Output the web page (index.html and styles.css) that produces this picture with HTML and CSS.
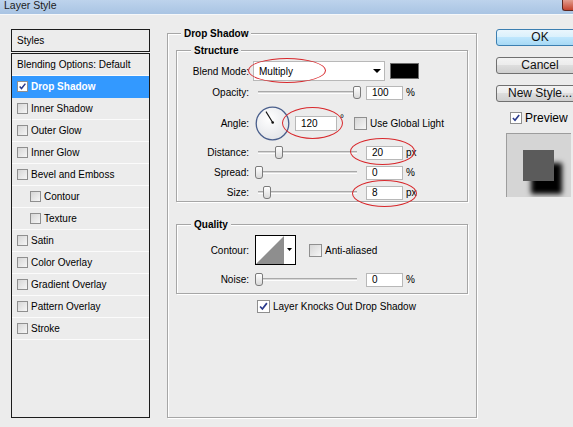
FILE: index.html
```html
<!DOCTYPE html>
<html>
<head>
<meta charset="utf-8">
<title>Layer Style</title>
<link rel="stylesheet" href="styles.css">
</head>
<body>
<div class="window">
  <div class="titlebar"><span class="title">Layer Style</span><span class="close"></span></div>
  <div class="content">
    <div class="styles-panel">
      <div class="styles-header">Styles</div>
      <ul class="styles-list">
        <li class="item">Blending Options: Default</li>
        <li class="item selected"><span class="cb checked"><svg viewBox="0 0 11 11"><path d="M2 5.5 L4.3 8 L9 2" fill="none" stroke="#2a3a8c" stroke-width="1.8"/></svg></span>Drop Shadow</li>
        <li class="item"><span class="cb"></span>Inner Shadow</li>
        <li class="item"><span class="cb"></span>Outer Glow</li>
        <li class="item"><span class="cb"></span>Inner Glow</li>
        <li class="item"><span class="cb"></span>Bevel and Emboss</li>
        <li class="item sub"><span class="cb"></span>Contour</li>
        <li class="item sub"><span class="cb"></span>Texture</li>
        <li class="item"><span class="cb"></span>Satin</li>
        <li class="item"><span class="cb"></span>Color Overlay</li>
        <li class="item"><span class="cb"></span>Gradient Overlay</li>
        <li class="item"><span class="cb"></span>Pattern Overlay</li>
        <li class="item"><span class="cb"></span>Stroke</li>
      </ul>
    </div>

    <fieldset class="group main-group">
      <legend>Drop Shadow</legend>
      <fieldset class="group sub-group structure">
        <legend>Structure</legend>
        <div class="row blend-row">
          <span class="lbl">Blend Mode:</span>
          <div class="select"><span>Multiply</span><span class="arrow"></span></div>
          <div class="swatch"></div>
        </div>
        <div class="row slider-row opacity-row">
          <span class="lbl">Opacity:</span>
          <div class="slider"><div class="track"></div><div class="thumb" style="left:98px"></div></div>
          <div class="num">100</div><span class="unit">%</span>
        </div>
        <div class="row angle-row">
          <span class="lbl">Angle:</span>
          <svg class="dial" viewBox="0 0 35 35">
            <defs><radialGradient id="dg" cx="0.4" cy="0.35" r="0.7"><stop offset="0" stop-color="#ffffff"/><stop offset="1" stop-color="#e2e4e8"/></radialGradient></defs>
            <circle cx="17.5" cy="17.5" r="16.3" fill="url(#dg)" stroke="#4a5f8c" stroke-width="1.3"/>
            <line x1="17.7" y1="16.5" x2="11" y2="5.6" stroke="#111" stroke-width="1.1"/>
            <circle cx="17.7" cy="16.5" r="1.3" fill="#111"/>
          </svg>
          <div class="num angle">120</div><span class="deg">°</span>
          <span class="cb lg glob"></span><span class="cbtext">Use Global Light</span>
        </div>
        <div class="row slider-row">
          <span class="lbl">Distance:</span>
          <div class="slider"><div class="track"></div><div class="thumb" style="left:20px"></div></div>
          <div class="num">20</div><span class="unit">px</span>
        </div>
        <div class="row slider-row">
          <span class="lbl">Spread:</span>
          <div class="slider"><div class="track"></div><div class="thumb" style="left:0px"></div></div>
          <div class="num">0</div><span class="unit">%</span>
        </div>
        <div class="row slider-row">
          <span class="lbl">Size:</span>
          <div class="slider"><div class="track"></div><div class="thumb" style="left:8px"></div></div>
          <div class="num">8</div><span class="unit">px</span>
        </div>
      </fieldset>

      <fieldset class="group sub-group quality">
        <legend>Quality</legend>
        <div class="row contour-row">
          <span class="lbl">Contour:</span>
          <svg class="contour" viewBox="0 0 41 30">
            <rect x="0.5" y="0.5" width="40" height="29" fill="#fff" stroke="#000"/>
            <polygon points="1,29 29,1 29,29" fill="#8e8e8e"/>
            <polygon points="32,13 37,13 34.5,16" fill="#000"/>
          </svg>
          <span class="cb lg aa"></span><span class="cbtext">Anti-aliased</span>
        </div>
        <div class="row slider-row noise-row">
          <span class="lbl">Noise:</span>
          <div class="slider"><div class="track"></div><div class="thumb" style="left:0px"></div></div>
          <div class="num">0</div><span class="unit">%</span>
        </div>
      </fieldset>

      <div class="row knock-row">
        <span class="cb lg checked"><svg viewBox="0 0 13 13"><path d="M2.5 6.5 L5.2 9.5 L10.5 2.5" fill="none" stroke="#2a3a8c" stroke-width="2"/></svg></span><span class="cbtext">Layer Knocks Out Drop Shadow</span>
      </div>
    </fieldset>

    <div class="side">
      <div class="btn ok">OK</div>
      <div class="btn">Cancel</div>
      <div class="btn">New Style...</div>
      <div class="preview-row">
        <span class="cb md checked"><svg viewBox="0 0 12 12"><path d="M2.3 6 L4.8 8.8 L9.8 2.3" fill="none" stroke="#2a3a8c" stroke-width="1.9"/></svg></span><span>Preview</span>
      </div>
      <div class="preview"><div class="pv-square"></div></div>
    </div>
  </div>

  <div class="mark m1"></div>
  <div class="mark m2"></div>
  <div class="mark m3"></div>
  <div class="mark m4"></div>
</div>
</body>
</html>
```

FILE: styles.css
```css
* { box-sizing: border-box; }
html, body { margin: 0; padding: 0; }
body {
  background: #ececec;
  font-family: "Liberation Sans", Arial, sans-serif;
  font-size: 10px;
  color: #000;
  width: 573px;
  height: 427px;
  overflow: hidden;
}
.window { position: relative; width: 573px; height: 427px; }

.titlebar {
  height: 15px;
  display: flex;
  justify-content: space-between;
  align-items: flex-start;
  background: linear-gradient(#bdd3ec, #a9c4e3);
  border-bottom: 1px solid #f6f8fa;
  overflow: hidden;
}
.title { font-size: 10.5px; line-height: 10px; margin-left: 4px; color: #1b1b1b; }
.close {
  width: 11px; height: 11px;
  background: linear-gradient(#e39d8f, #c5442f);
  border-left: 1px solid #5d2720;
  border-bottom: 1px solid #5d2720;
  border-bottom-left-radius: 3px;
}

.content { display: flex; align-items: flex-start; }

/* left list */
.styles-panel {
  margin: 14px 0 0 11px;
  width: 139px;
  height: 389px;
  display: flex;
  flex-direction: column;
  flex: none;
}
.styles-header {
  height: 23px;
  border: 1px solid #1c1c1c;
  padding-left: 5px;
  line-height: 21px;
}
.styles-list {
  list-style: none;
  margin: 1px 0 0;
  padding: 0;
  flex: 1;
  border: 1px solid #1c1c1c;
}
.item {
  height: 22px;
  border-bottom: 1px solid #fbfbfb;
  display: flex;
  align-items: center;
  gap: 3px;
  padding-left: 5px;
}
.item.sub { padding-left: 18px; }
.item.selected {
  background: #3399ff;
  border-bottom-color: #3399ff;
  color: #fff;
  font-weight: bold;
}

/* checkboxes */
.cb {
  width: 11px; height: 11px;
  border: 1px solid #8f8f8f;
  background: linear-gradient(135deg, #d6d6d6, #f6f6f6);
  flex: none;
  display: inline-block;
}
.cb.lg { width: 13px; height: 13px; }
.cb.md { width: 12px; height: 12px; }
.cb.checked { background: #fff; }
.cb svg { display: block; width: 100%; height: 100%; }
.cbtext { margin-left: 3px; white-space: nowrap; }

/* group boxes */
.group {
  margin: 0;
  padding: 0;
  min-width: 0;
  border: 1px solid #a6a6a6;
  box-shadow: 1px 1px 0 #fff, inset 1px 1px 0 #fff;
}
legend {
  font-weight: bold;
  padding: 0 3px;
  line-height: 13px;
  background: #ececec;
}
.main-group { width: 310px; height: 391px; margin: 12px 0 0 17px; flex: none; }
.main-group > legend { margin-left: 13px; }
.sub-group { width: 292px; margin-left: 8px; }
.sub-group > legend { margin-left: 14px; }
.structure { margin-top: 4px; padding-bottom: 1px; }
.quality { margin-top: 16px; padding-bottom: 6px; }

.row { display: flex; align-items: center; }
.lbl { width: 72px; text-align: right; flex: none; white-space: nowrap; }

.blend-row { margin-top: 4px; height: 20px; }
.select {
  margin-left: 4px;
  width: 132px; height: 20px;
  background: #fff;
  border: 1px solid #b8b8b8;
  display: flex;
  align-items: center;
  justify-content: space-between;
  padding: 0 3px 0 5px;
}
.arrow {
  width: 0; height: 0;
  border-left: 4px solid transparent;
  border-right: 4px solid transparent;
  border-top: 4px solid #000;
}
.swatch {
  margin-left: 5px;
  width: 29px; height: 16px;
  background: #000;
  border: 1px solid #6e6e6e;
}

.slider-row { height: 15px; margin-top: 5px; }
.opacity-row { margin-top: 4px; }
.slider {
  position: relative;
  margin-left: 6px;
  width: 104px; height: 15px;
  flex: none;
  display: flex;
  align-items: center;
  padding: 0 2px 0 3px;
}
.track {
  flex: 1;
  height: 3px;
  border-top: 1px solid #a9a9a9;
  border-bottom: 1px solid #fdfdfd;
  background: #d8d8d8;
}
.thumb {
  position: absolute;
  top: 1px;
  width: 8px; height: 13px;
  border: 1px solid #7b7b7b;
  border-radius: 2px 2px 3px 3px;
  background: linear-gradient(#ffffff, #d9d9d9);
}
.num {
  margin-left: 7px;
  width: 37px; height: 14px;
  background: #fff;
  border: 1px solid #b8b8b8;
  padding-left: 5px;
  line-height: 12px;
  flex: none;
}
.unit { margin-left: 3px; }

.angle-row { margin-top: 6px; height: 34px; }
.dial { margin-left: 6px; width: 35px; height: 35px; flex: none; }
.num.angle { margin-left: 5px; width: 42px; height: 15px; line-height: 13px; }
.deg { margin-left: 3px; align-self: flex-start; margin-top: 8px; line-height: 10px; }
.glob { margin-left: 10px; }

.contour-row { margin-top: 4px; height: 30px; }
.contour { margin-left: 6px; width: 41px; height: 30px; flex: none; }
.aa { margin-left: 13px; }
.noise-row { margin-top: 7px; }

.knock-row { margin: 6px 0 0 89px; height: 13px; }

/* right column */
.side {
  margin: 14px 0 0 19px;
  width: 88px;
  flex: none;
  display: flex;
  flex-direction: column;
}
.btn {
  height: 17px;
  border: 1px solid #707070;
  border-radius: 3px;
  background: linear-gradient(#f3f3f3 0%, #ebebeb 50%, #dddddd 50%, #cfcfcf 100%);
  font-size: 12px;
  line-height: 15px;
  text-align: center;
  color: #111;
}
.btn + .btn { margin-top: 11px; }
.btn.ok {
  border-color: #3c7fb1;
  background: linear-gradient(#eaf6fd 0%, #d9f0fc 50%, #bee6fd 50%, #a7d9f5 100%);
}
.preview-row {
  margin-top: 9px;
  padding-left: 14px;
  height: 13px;
  display: flex;
  align-items: center;
  gap: 3px;
  font-size: 12px;
}
.preview {
  margin: 9px 0 0 10px;
  width: 65px; height: 64px;
  background: #d5d5d5;
  border-top: 1px solid #9d9d9d;
  border-left: 1px solid #9d9d9d;
  padding: 16px 0 0 16px;
  overflow: hidden;
}
.pv-square {
  width: 31px; height: 31px;
  background: #5b5b5b;
  box-shadow: 8px 13px 5px #000;
}

/* red annotation ellipses */
.mark {
  position: absolute;
  border: 1px solid #d8282c;
  border-radius: 50%;
}
.m1 { left: 248px; top: 58px; width: 78px; height: 25px; }
.m2 { left: 282px; top: 107px; width: 61px; height: 32px; }
.m3 { left: 350px; top: 138px; width: 65px; height: 27px; }
.m4 { left: 352px; top: 180px; width: 65px; height: 27px; }
```
